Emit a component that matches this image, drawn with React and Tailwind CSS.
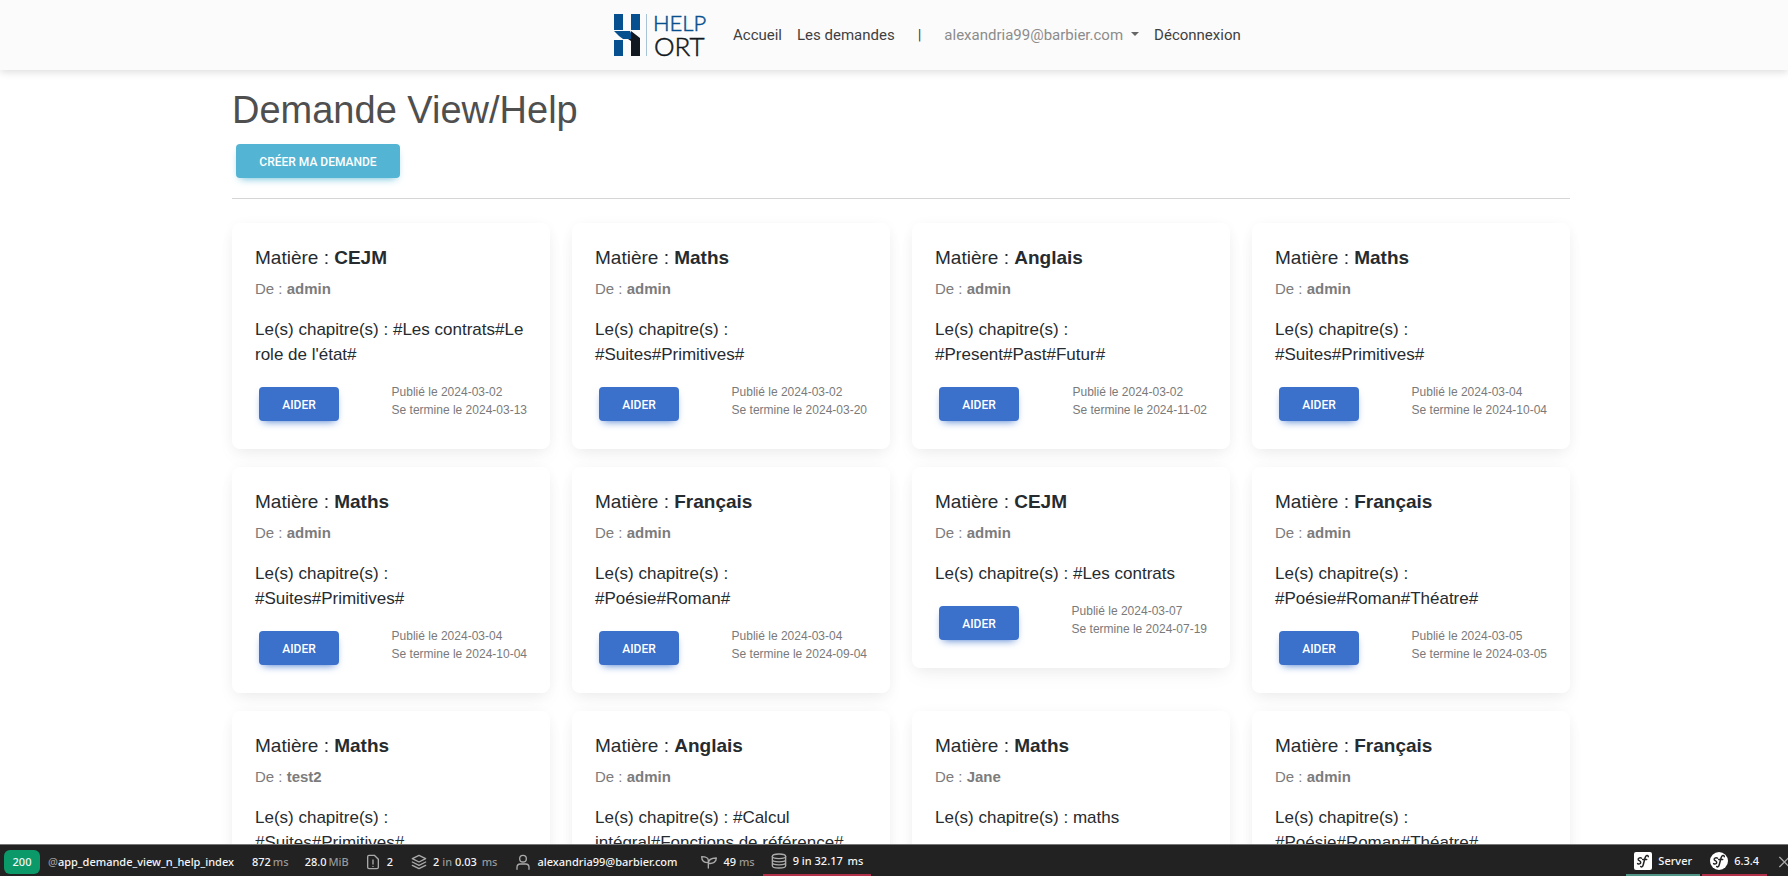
import React from 'react';

const requests = [
  { subject: 'CEJM', author: 'admin', chapters: "#Les contrats#Le role de l'état#", published: '2024-03-02', ends: '2024-03-13' },
  { subject: 'Maths', author: 'admin', chapters: '#Suites#Primitives#', published: '2024-03-02', ends: '2024-03-20' },
  { subject: 'Anglais', author: 'admin', chapters: '#Present#Past#Futur#', published: '2024-03-02', ends: '2024-11-02' },
  { subject: 'Maths', author: 'admin', chapters: '#Suites#Primitives#', published: '2024-03-04', ends: '2024-10-04' },
  { subject: 'Maths', author: 'admin', chapters: '#Suites#Primitives#', published: '2024-03-04', ends: '2024-10-04' },
  { subject: 'Français', author: 'admin', chapters: '#Poésie#Roman#', published: '2024-03-04', ends: '2024-09-04' },
  { subject: 'CEJM', author: 'admin', chapters: '#Les contrats', published: '2024-03-07', ends: '2024-07-19' },
  { subject: 'Français', author: 'admin', chapters: '#Poésie#Roman#Théatre#', published: '2024-03-05', ends: '2024-03-05' },
  { subject: 'Maths', author: 'test2', chapters: '#Suites#Primitives#' },
  { subject: 'Anglais', author: 'admin', chapters: '#Calcul intégral#Fonctions de référence#' },
  { subject: 'Maths', author: 'Jane', chapters: 'maths' },
  { subject: 'Français', author: 'admin', chapters: '#Poésie#Roman#Théatre#' },
];

function Logo() {
  return (
    <svg width="100" height="52" viewBox="0 -4 100 52" role="img" aria-label="Help Ort">
      <path d="M1 1h9v16H1zM18 1h9v16h-9zM1 27h9v16H1z" fill="#07508f" />
      <path d="M1 18h16l1 2v6h-8l-4-3z" fill="#07508f" />
      <path d="M18 18l9 7v18h-9V28l-3-2h3z" fill="#111820" />
      <path d="M33 1h1v42h-1z" fill="#a9c3d6" />
      <text x="40" y="18" fill="#07508f" stroke="#07508f" strokeWidth="0.500" fontFamily="Lato, sans-serif" fontWeight="300" fontSize="22">HELP</text>
      <text x="41" y="43" fill="#111820" stroke="#111820" strokeWidth="0.500" fontFamily="Lato, sans-serif" fontWeight="300" fontSize="26">ORT</text>
    </svg>
  );
}

function NavBar() {
  return (
    <header className="relative z-10 flex h-[70px] shrink-0 items-center bg-[#fbfbfb] pl-[613px] font-[Roboto,sans-serif] text-[15px] text-[#3f3f3f] shadow-[0_2px_8px_rgba(0,0,0,0.14)]">
      <a href="#accueil" className="mr-5"><Logo /></a>
      <nav className="flex items-center whitespace-nowrap">
        <a href="#accueil" className="mr-[15px]">Accueil</a>
        <a href="#demandes">Les demandes</a>
        <span className="mx-[23px]">|</span>
        <button type="button" className="mr-[15px] flex items-center gap-2 text-[#8c8c8c]">
          alexandria99@barbier.com
          <span className="mb-[2px] border-x-4 border-t-4 border-x-transparent border-t-[#666]" />
        </button>
        <a href="#deconnexion">Déconnexion</a>
      </nav>
    </header>
  );
}

function RequestCard({ subject, author, chapters, published, ends }) {
  return (
    <article className="rounded-lg bg-white px-[23px] pt-[23px] pb-[28px] shadow-[0_2px_15px_-3px_rgba(0,0,0,0.07),0_10px_20px_-2px_rgba(0,0,0,0.04)]">
      <h2 className="text-[19px] leading-[24px]">Matière : <strong>{subject}</strong></h2>
      <p className="mt-[7px] text-[15px] leading-[24px] text-[#7c7c7c]">De : <strong>{author}</strong></p>
      <p className="mt-[16px] text-[17px] leading-[25px]">Le(s) chapitre(s) : {chapters}</p>
      {published && (
        <div className="mt-[16px] flex items-start justify-between">
          <button type="button" className="mt-[4px] ml-[4px] h-[34px] w-[80px] rounded bg-[#3b71ca] pt-px font-[Roboto,sans-serif] text-[12px] font-medium text-white shadow-[0_4px_9px_-4px_#3b71ca]">AIDER</button>
          <p className="text-[12px] leading-[18px] whitespace-nowrap text-[#7a7a7a]">
            Publié le {published}<br />Se termine le {ends}
          </p>
        </div>
      )}
    </article>
  );
}

function Icon({ children }) {
  return (
    <svg width="16" height="16" viewBox="0 0 24 24" fill="none" stroke="#aaa" strokeWidth="2" strokeLinecap="round" strokeLinejoin="round" aria-hidden="true">
      {children}
    </svg>
  );
}

function SymfonyMark({ round }) {
  return (
    <svg width="18" height="18" viewBox="0 0 18 18" aria-hidden="true">
      <rect width="18" height="18" rx={round ? 9 : 2} fill="#fff" />
      <path d="M7.500 6.200c-1.800-.9-3.900.2-3.200 1.700.5.900 2.600 1 2.400 2.700-.2 1.300-1.900 1.800-3.100 1" fill="none" stroke="#222" strokeWidth="1.500" strokeLinecap="round" />
      <path d="M14.300 4.700c-.3-2-2.500-1.800-3.300 1.300L9.300 12.500c-.6 2.400-1.700 2.900-2.600 2M8.700 7.500h4" fill="none" stroke="#222" strokeWidth="1.500" strokeLinecap="round" />
    </svg>
  );
}

function DebugToolbar() {
  return (
    <footer className="relative z-10 flex h-8 shrink-0 items-stretch overflow-hidden border-t border-[#777] bg-[#222] font-['Noto_Sans',sans-serif] text-[11px] font-medium whitespace-nowrap text-[#f5f5f5] *:pt-[3px]">
      <div className="flex items-center pl-1">
        <span className="flex h-6 w-9 items-center justify-center rounded-md bg-[#0b996a]">200</span>
      </div>
      <div className="flex items-center pl-2"><span className="text-[#999]">@</span>app_demande_view_n_help_index</div>
      <div className="flex items-center gap-[2px] pl-[18px]">872<span className="text-[#999]">ms</span></div>
      <div className="flex items-center gap-[2px] pl-4">28.0<span className="text-[#999]">MiB</span></div>
      <div className="flex items-center gap-[6px] pl-4">
        <Icon><path d="M14 2H6a2 2 0 0 0-2 2v16a2 2 0 0 0 2 2h12a2 2 0 0 0 2-2V8zM12 9v6M12 18.500v.1" /></Icon>2
      </div>
      <div className="flex items-center gap-[6px] pl-[18px]">
        <Icon><path d="M12 2 2 7l10 5 10-5zM2 12l10 5 10-5M2 17l10 5 10-5" /></Icon>
        <span>2 <span className="text-[#999]">in</span> 0.03 <span className="ml-[2px] text-[#999]">ms</span></span>
      </div>
      <div className="flex items-center gap-[6px] pl-[18px]">
        <Icon><circle cx="12" cy="7" r="5" /><path d="M3 23v-3a5 5 0 0 1 5-5h8a5 5 0 0 1 5 5v3" /></Icon>
        alexandria99@barbier.com
      </div>
      <div className="flex items-center gap-[6px] pl-[24px]">
        <Icon><path d="M11 21V10C11 6 7 4 1 4c0 5 3 9 10 9M11 14c0-6 4-8 12-8 0 6-5 9-12 8" /></Icon>
        <span>49 <span className="text-[#999]">ms</span></span>
      </div>
      <div className="ml-2 flex items-center gap-[6px] border-b-2 border-[#b0304a] px-2">
        <Icon><ellipse cx="12" cy="5" rx="10" ry="3.500" /><path d="M2 5v14c0 2 4 3.500 10 3.500S22 21 22 19V5M2 9.700c0 2 4 3.500 10 3.500s10-1.500 10-3.500M2 14.300c0 2 4 3.500 10 3.500s10-1.500 10-3.500" /></Icon>
        <span>9 in 32.17 <span className="ml-[2px]">ms</span></span>
      </div>
      <div className="ml-auto flex items-center gap-[6px] border-b-2 border-[#4f9484] px-2"><SymfonyMark />Server</div>
      <div className="ml-[2px] flex items-center gap-[6px] border-b-2 border-[#b0304a] px-2"><SymfonyMark round />6.3.4</div>
      <button type="button" aria-label="Fermer" className="-mr-[5px] ml-[10px] flex items-center">
        <Icon><path d="M4 5l14 14M18 5L4 19" /></Icon>
      </button>
    </footer>
  );
}

export default function App() {
  return (
    <div className="flex h-screen flex-col bg-white font-['Liberation_Sans',Arial,sans-serif] text-[#262b30]">
      <NavBar />
      <main className="min-h-0 flex-1 overflow-y-auto pr-[218px] pl-[232px] [scrollbar-width:none]">
        <h1 className="pt-[17px] text-[38px] leading-[46px] text-[#4f4f4f]">Demande View/Help</h1>
        <button type="button" className="mt-[11px] ml-[4px] block h-[34px] w-[164px] rounded bg-[#54b4d3] pt-px font-[Roboto,sans-serif] text-[12px] font-medium text-white shadow-[0_4px_9px_-4px_#54b4d3]">CRÉER MA DEMANDE</button>
        <hr className="mt-[20px] border-[#d5d5d5]" />
        <div className="mt-6 grid grid-cols-4 items-start gap-x-[22px] gap-y-[18px]">
          {requests.map((request, index) => <RequestCard key={index} {...request} />)}
        </div>
      </main>
      <DebugToolbar />
    </div>
  );
}
